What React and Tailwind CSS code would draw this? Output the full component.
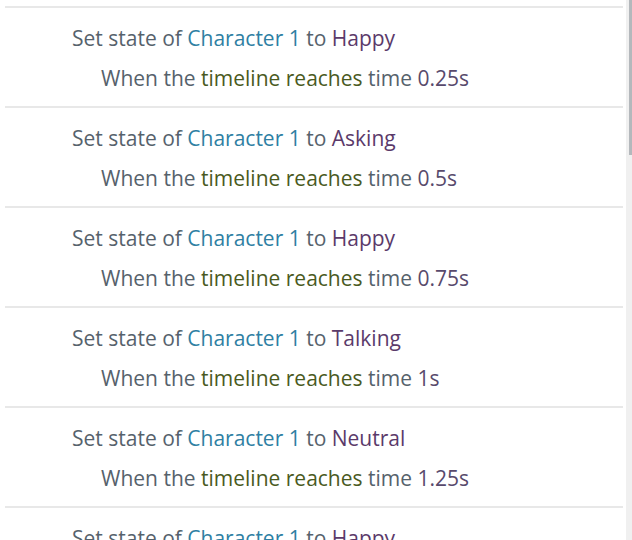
const ROWS = [
  { state: 'Happy', time: '0.25s' },
  { state: 'Asking', time: '0.5s' },
  { state: 'Happy', time: '0.75s' },
  { state: 'Talking', time: '1s' },
  { state: 'Neutral', time: '1.25s' },
  { state: 'Happy', time: '1.5s' },
]

function EventRow({ state, time }) {
  return (
    <div className="border-t-2 border-[#e8e8e8] h-[100px] pt-[10px]">
      <div className="pl-[67px] h-[40px] leading-[40px] text-[#56626c]">
        Set state of <span className="text-[#2f7fa3]">Character 1</span> to{' '}
        <span className="text-[#5b3a6a]">{state}</span>
      </div>
      <div className="pl-[96px] h-[40px] leading-[40px] text-[#56626c]">
        When the <span className="text-[#4a5a1e]">timeline reaches</span> time{' '}
        <span className="text-[#584a6c]">{time}</span>
      </div>
    </div>
  )
}

export default function App() {
  return (
    <div className="h-[540px] w-[632px] overflow-hidden bg-white flex font-['Open_Sans',sans-serif] text-[21px]">
      <div className="flex-1 pt-[6px] pl-[5px] pr-[3px]">
        {ROWS.map((r, i) => (
          <EventRow key={i} {...r} />
        ))}
      </div>
      <div className="w-[6px] flex">
        <div className="w-[3px] bg-[#f0f0f0]" />
        <div className="w-[3px] bg-[#f0f0f0] flex flex-col">
          <div className="h-[155px] bg-[#b4b8bc]" />
        </div>
      </div>
    </div>
  )
}
